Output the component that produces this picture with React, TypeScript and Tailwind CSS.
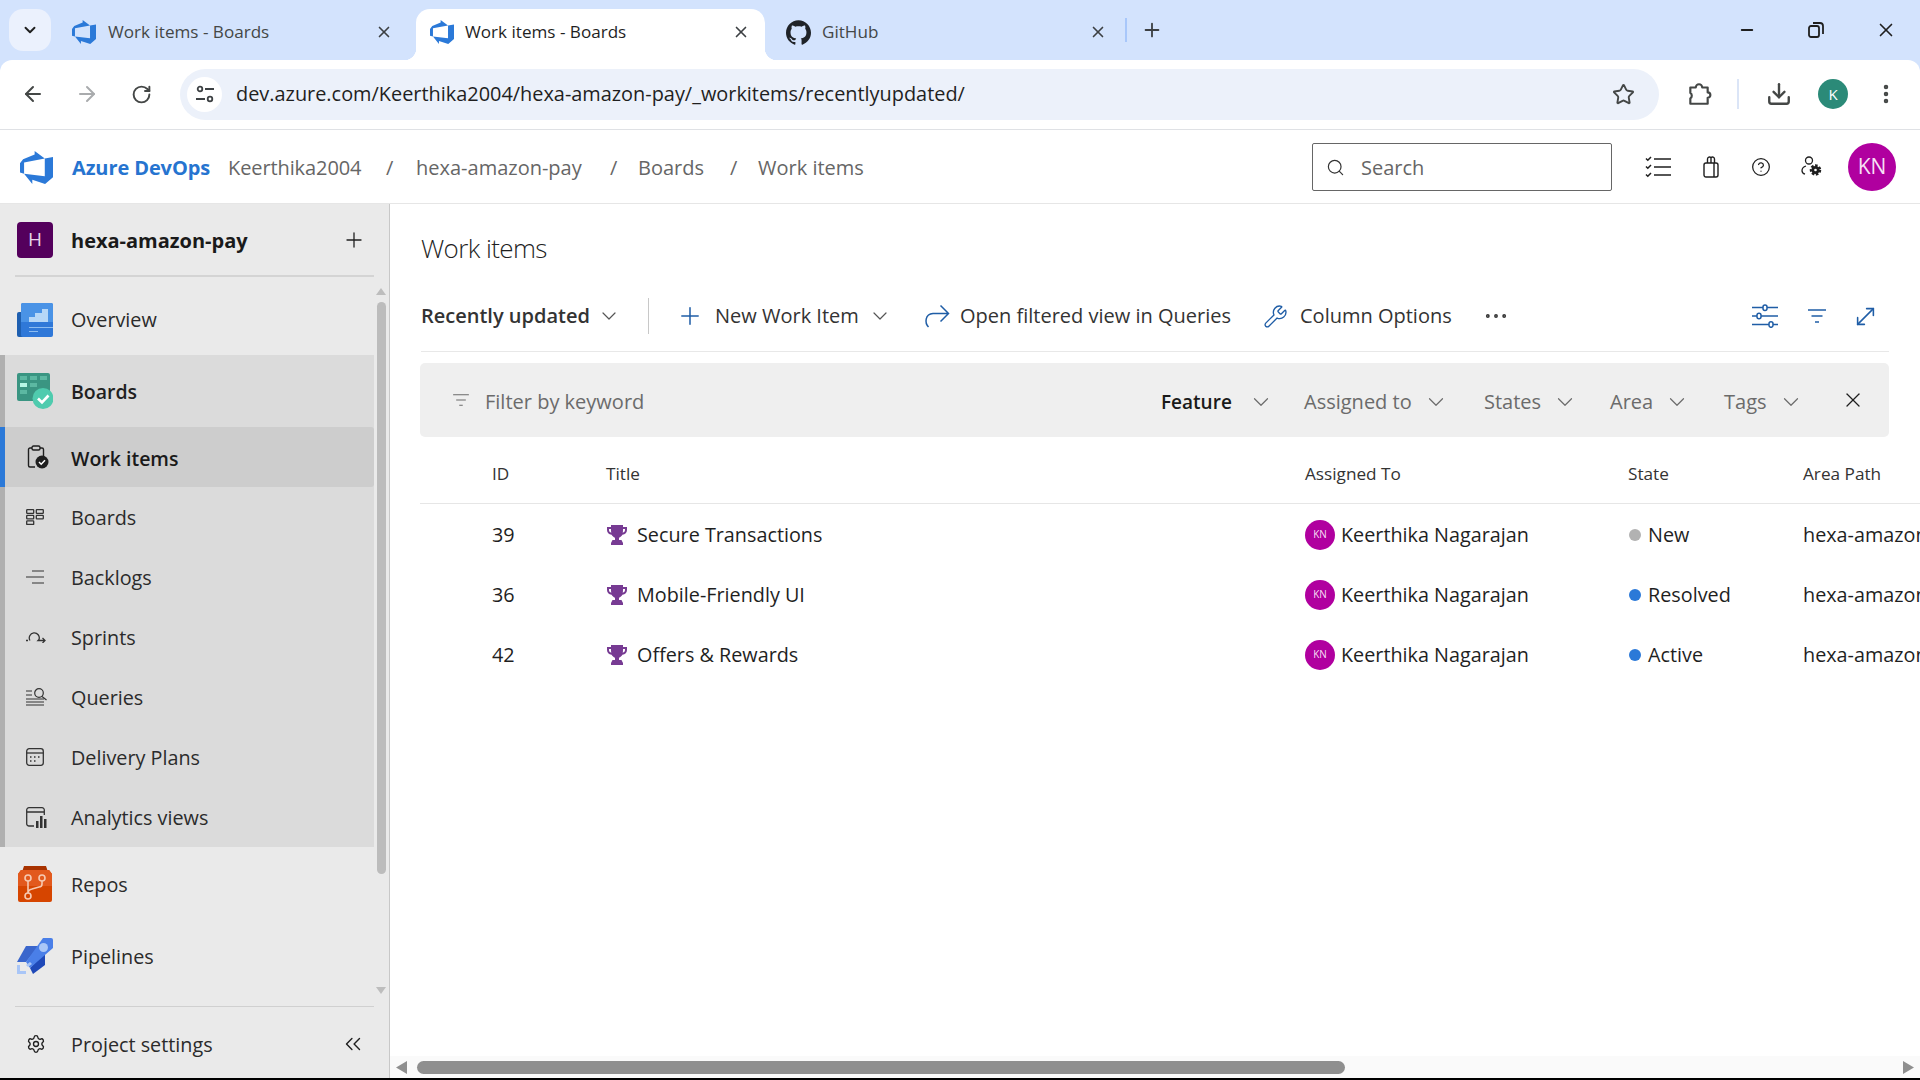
import React from 'react';
import {
  ArrowLeft,
  ArrowRight,
  ChevronDown,
  ChevronsLeft,
  CircleHelp,
  Download,
  EllipsisVertical,
  Ellipsis,
  Minus,
  MoveDiagonal,
  Plus,
  RotateCw,
  Search,
  Settings,
  Star,
  Wrench,
  X,
} from 'lucide-react';
import { SiGithub } from 'react-icons/si';

const ROWS = [
  { id: '39', title: 'Secure Transactions', state: 'New', dot: 'bg-[#b2b2b2]' },
  { id: '36', title: 'Mobile-Friendly UI', state: 'Resolved', dot: 'bg-[#2b79d8]' },
  { id: '42', title: 'Offers & Rewards', state: 'Active', dot: 'bg-[#2b79d8]' },
];

const FILTERS = [
  { label: 'Assigned to', width: 'w-[180px]' },
  { label: 'States', width: 'w-[126px]' },
  { label: 'Area', width: 'w-[114px]' },
  { label: 'Tags', width: 'w-[100px]' },
];

const DevOpsLogo = ({ className }: { className?: string }) => (
  <svg viewBox="0 0 24 24" className={className} fill="currentColor">
    <path d="M0 8.877L2.247 5.91l8.405-3.416V.022l7.37 5.393L2.966 8.338v8.225L0 15.707zm24-4.45v14.651l-5.753 4.9-9.303-3.057v3.056l-5.978-7.416 15.057 1.798V5.415z" />
  </svg>
);

const FilterLines = ({ className }: { className?: string }) => (
  <svg viewBox="0 0 20 16" className={className} fill="none" stroke="currentColor" strokeWidth="1.3">
    <path d="M1 2h18M4.5 8h11M8 14h4" />
  </svg>
);

const Trophy = () => (
  <svg viewBox="0 0 20 20" className="h-5 w-5 shrink-0" fill="#773b93">
    <path d="M4 0h12v2h4v3c0 2.6-1.8 4.4-4.6 4.8-.8 1.5-2 2.5-3.4 2.9V15h2.5l1.5 3v2H4v-2l1.5-3H8v-2.3c-1.4-.4-2.6-1.4-3.4-2.9C1.800 9.400 0 7.600 0 5V2h4zM2 4v1c0 1.300.8 2.300 2.300 2.700C4.100 6.900 4 6 4 5V4zm16 0h-2v1c0 1-.1 1.900-.3 2.700C17.200 7.300 18 6.300 18 5z" />
  </svg>
);

const SmallTriangle = ({ down }: { down?: boolean }) => (
  <svg viewBox="0 0 10 7" className="h-[7px] w-[10px]" fill="#bdbdbd">
    <path d={down ? 'M0 0h10L5 7z' : 'M5 0l5 7H0z'} />
  </svg>
);

const OverviewIcon = () => (
  <svg viewBox="0 0 36 34" className="h-[34px] w-9">
    <rect x="0" y="9" width="14" height="25" rx="2" fill="#1e5fb0" />
    <rect x="4" y="0" width="32" height="34" rx="2" fill="#2f78d8" />
    <path d="M4 2a2 2 0 0 1 2-2h28a2 2 0 0 1 2 2v17H4z" fill="#4a93e6" />
    <path d="M12 14h6v-4h7V6h6v13H12z" fill="#b6d7f7" />
    <path d="M12 24h24v1H12zM12 28h9v1h-9z" fill="#8cbcf0" />
  </svg>
);

const BoardsIcon = () => (
  <svg viewBox="0 0 36 36" className="h-9 w-9">
    <rect x="0" y="0" width="33" height="28" rx="2" fill="#3a9582" />
    <path d="M3 3h7v4H3zM13 3h7v4h-7zM23 3h7v4h-7zM13 10h7v4h-7zM3 17h7v4H3z" fill="#5cb8a2" />
    <rect x="3" y="10" width="7" height="4" fill="#b6f5e4" />
    <circle cx="26" cy="25.500" r="10.500" fill="#4fcbae" />
    <path d="M21 25.500l4 4 6.500-7" stroke="#fff" strokeWidth="2.600" fill="none" />
  </svg>
);

const ReposIcon = () => (
  <svg viewBox="0 0 34 36" className="h-9 w-[34px]">
    <path d="M6 0h22l2 6H4z" fill="#a83200" />
    <path d="M3 4h28l3 4v26a2 2 0 0 1-2 2H2a2 2 0 0 1-2-2V8z" fill="#d64500" />
    <path d="M3 4h28l3 4v12H0V8z" fill="#e2591d" />
    <g stroke="#f6c9b1" strokeWidth="1.600" fill="none">
      <circle cx="10" cy="12" r="3" />
      <circle cx="24" cy="12" r="3" />
      <circle cx="10" cy="30" r="3" />
      <path d="M10 15v12M24 15v3c0 2-1 3-3 3l-7 2c-2 .5-4 2-4 4" />
    </g>
  </svg>
);

const PipelinesIcon = () => (
  <svg viewBox="0 0 36 36" className="h-9 w-9">
    <path d="M9 8h13L9 24H0z" fill="#3a66cc" />
    <path d="M28 14v13l-12 9-3-6z" fill="#1f49b8" />
    <path d="M9 24L26 0h8a2 2 0 0 1 2 2v8L13 30z" fill="#4a7fe8" />
    <circle cx="26.500" cy="9.500" r="4.500" fill="#a9c6f7" />
    <path d="M0 27h3v6h6v3H0z" fill="#a9c6f7" />
    <path d="M9 27l4-3 2 2-4 3z" fill="#a9c6f7" />
  </svg>
);

const WorkItemsIcon = () => (
  <svg viewBox="0 0 22 24" className="h-6 w-[22px]" fill="none" stroke="#1f1f1f" strokeWidth="1.400">
    <path d="M5 3H3a1.500 1.500 0 0 0-1.500 1.500v16A1.500 1.500 0 0 0 3 22h5M13 3h2a1.500 1.500 0 0 1 1.500 1.500V11" />
    <rect x="5" y="1" width="8" height="4" rx="1.500" />
    <circle cx="15" cy="17" r="6.500" fill="#1f1f1f" stroke="none" />
    <path d="M12 17l2.200 2.200 3.800-4" stroke="#fff" strokeWidth="1.500" />
  </svg>
);

const SubBoardsIcon = () => (
  <svg viewBox="0 0 18 16" className="h-4 w-[18px]" fill="none" stroke="#333" strokeWidth="1.300">
    <rect x=".7" y=".7" width="7" height="3.600" rx=".6" />
    <rect x=".7" y="6.300" width="7" height="3.600" rx=".6" />
    <rect x=".7" y="11.900" width="7" height="3.600" rx=".6" />
    <rect x="10.300" y=".7" width="7" height="3.600" rx=".6" />
    <rect x="10.300" y="6.300" width="7" height="3.600" rx=".6" />
  </svg>
);

const BacklogsIcon = () => (
  <svg viewBox="0 0 18 14" className="h-[14px] w-[18px]" fill="none" stroke="#333" strokeWidth="1.200">
    <path d="M6 1h12M0 7h18M6 13h12" />
  </svg>
);

const SprintsIcon = () => (
  <svg viewBox="0 0 20 12" className="h-3 w-5" fill="none" stroke="#333" strokeWidth="1.300">
    <path d="M0 9.500h2M4 9.500a5 5 0 1 1 9-1l-1 1h7M16.500 7l2.500 2.500-2.500 2.500" />
  </svg>
);

const QueriesIcon = () => (
  <svg viewBox="0 0 21 18" className="h-[18px] w-[21px]" fill="none" stroke="#333" strokeWidth="1.200">
    <path d="M0 3h6M0 7h6M0 11h18M0 14h18M0 17h18" />
    <circle cx="13" cy="5" r="4.300" />
    <path d="M16 8.500l4.500 3.500" />
  </svg>
);

const DeliveryIcon = () => (
  <svg viewBox="0 0 18 18" className="h-[18px] w-[18px]" fill="none" stroke="#333" strokeWidth="1.300">
    <rect x=".7" y=".7" width="16.600" height="16.600" rx="2.500" />
    <path d="M.7 5h16.600" />
    <path d="M4 9h1.500M8 9h1.500M12 9h1.500M4 13h1.500M8 13h1.500" strokeWidth="1.500" />
  </svg>
);

const AnalyticsIcon = () => (
  <svg viewBox="0 0 21 21" className="h-[21px] w-[21px]" fill="none" stroke="#333" strokeWidth="1.300">
    <path d="M8 19H3a2.300 2.300 0 0 1-2.300-2.300V3A2.300 2.300 0 0 1 3 .7h13A2.300 2.300 0 0 1 18.300 3v5M.7 5h17.600" />
    <path d="M10 14h2.500v7H10zM14 9h2.500v12H14zM18 12h2.500v9H18z" fill="#333" stroke="none" />
  </svg>
);

const UserGear = () => (
  <svg viewBox="0 0 22 22" className="h-[22px] w-[22px]" fill="none" stroke="#1f1f1f" strokeWidth="1.300">
    <circle cx="8" cy="4.500" r="3.500" />
    <path d="M5 10C2.500 10.800 1 12.700 1 14.700c0 1.500 1 2.800 3 3.500" />
    <circle cx="14.500" cy="14" r="4" fill="#1f1f1f" strokeWidth="3.500" strokeDasharray="2.200 1.400" />
    <circle cx="14.500" cy="14" r="2" fill="#1f1f1f" stroke="none" />
    <circle cx="14.500" cy="14" r="1.300" fill="#fff" stroke="none" />
  </svg>
);

const TaskList = () => (
  <svg viewBox="0 0 26 22" className="h-[22px] w-[26px]" fill="none" stroke="#1f1f1f" strokeWidth="1.500">
    <path d="M9 3h17M9 11h17M9 19h17" strokeWidth="1.700" />
    <path d="M1 2.500l1.800 1.800L6 1M1 10.500l1.800 1.800L6 9M1 18.500l1.800 1.800L6 17" />
  </svg>
);

const BagIcon = () => (
  <svg viewBox="0 0 16 22" className="h-[22px] w-4" fill="none" stroke="#1f1f1f" strokeWidth="1.400">
    <rect x="1" y="7" width="14" height="14" rx="2" />
    <path d="M4.500 7V3a2 2 0 0 1 3.500-1.300A2 2 0 0 1 11.500 3v4M8 2v5M11 7v14" />
  </svg>
);

const SiteInfoIcon = () => (
  <svg viewBox="0 0 18 18" className="h-[18px] w-[18px]" fill="none" stroke="#3c4043" strokeWidth="1.800">
    <circle cx="4" cy="4" r="2.300" />
    <path d="M9 4h9M0 14h9" />
    <circle cx="14" cy="14" r="2.300" />
  </svg>
);

const ExtensionIcon = () => (
  <svg viewBox="0 0 24 24" className="h-[26px] w-[26px]" fill="none" stroke="#444746" strokeWidth="2">
    <path d="M4 6h5a3 3 0 0 1 6 0h5v4.500a2.500 2.500 0 0 1 0 5V21H4v-5a3 3 0 0 0 0-5z" strokeLinejoin="round" />
  </svg>
);

const RestoreIcon = () => (
  <svg viewBox="0 0 16 16" className="h-4 w-4" fill="none" stroke="#1f1f1f" strokeWidth="1.800">
    <rect x="1" y="4" width="10" height="11" rx="2" />
    <path d="M5 1h7a3 3 0 0 1 3 3v8" />
  </svg>
);

const ForwardArrow = () => (
  <svg viewBox="0 0 28 28" className="h-7 w-7" fill="none" stroke="#1f5da6" strokeWidth="1.500">
    <path d="M6.500 25C2.500 21 3 12 11 11.500h15M18.500 3.500l8 8-8 8" />
  </svg>
);

const ViewSliders = () => (
  <svg viewBox="0 0 26 24" className="h-6 w-[26px]" fill="none" stroke="#1f5da6" strokeWidth="1.500">
    <path d="M0 3.500h11M15 3.500h11M0 12h5M9 12h17M0 20.500h17M21 20.500h5" />
    <rect x="11" y="1" width="4" height="5.500" rx="2" />
    <rect x="5" y="9.200" width="4" height="5.500" rx="2" />
    <rect x="17" y="17.800" width="4" height="5.500" rx="2" />
  </svg>
);

const SideLink = ({ icon, label }: { icon: React.ReactNode; label: string }) => (
  <div className="flex h-[60px] items-center">
    <div className="flex w-[71px] shrink-0 items-center pl-[26px]">{icon}</div>
    <span className="mt-[2px] text-[19.800px] text-[#2b2b2b]">{label}</span>
  </div>
);

const ChromeTab = ({ icon, label, close, active, width }: { icon: React.ReactNode; label: string; close: string; active?: boolean; width: string }) => (
  <div className={`relative flex h-[51px] shrink-0 items-center pb-[5px] ${width} ${active ? 'rounded-t-[14px] bg-white text-[#1f1f1f]' : 'text-[#444746]'}`}>
    {active && (
      <>
        <div className="absolute -left-3 bottom-0 h-3 w-3 bg-[radial-gradient(circle_at_0_0,transparent_12px,#ffffff_12.500px)]" />
        <div className="absolute -right-3 bottom-0 h-3 w-3 bg-[radial-gradient(circle_at_100%_0,transparent_12px,#ffffff_12.500px)]" />
      </>
    )}
    {icon}
    <span className="text-[17.100px]">{label}</span>
    <X size={18} strokeWidth={2.200} className={`absolute top-[14px] ${close} text-[#3c4043]`} />
  </div>
);

export default function App() {
  return (
    <div className="flex h-[1080px] w-[1920px] flex-col overflow-hidden bg-white font-['Open_Sans',sans-serif]">
      {/* Browser chrome */}
      <div className="h-[130px] shrink-0 bg-[#d3e3fd]">
        <div className="flex h-[60px] pt-[9px]">
          <div className="ml-[9px] flex h-[42px] w-[42px] shrink-0 items-center justify-center rounded-[14px] bg-[#ebf1fd]">
            <ChevronDown size={18} strokeWidth={2.500} className="text-[#1f1f1f]" />
          </div>
          <div className="ml-[21px] w-[344px] shrink-0">
            <ChromeTab width="w-full" close="left-[303px]" label="Work items - Boards" icon={<DevOpsLogo className="mr-[12px] h-6 w-6 text-[#2b79d8]" />} />
          </div>
          <ChromeTab active width="w-[349px] pl-[14px]" close="left-[316px]" label="Work items - Boards" icon={<DevOpsLogo className="mr-[11px] h-6 w-6 text-[#2b79d8]" />} />
          <div className="ml-[21px] w-[339px] shrink-0">
            <ChromeTab width="w-full" close="left-[303px]" label="GitHub" icon={<SiGithub size={25} className="mr-[11px] text-[#1f2328]" />} />
          </div>
          <div className="mt-[9px] h-6 w-[2px] bg-[#a8c7fa]" />
          <Plus size={22} strokeWidth={2} className="ml-[14px] mt-[10px] text-[#3c4043]" />
          <div className="ml-auto flex h-[42px] items-center">
            <Minus size={18} strokeWidth={2.500} className="mr-[52px] text-[#1f1f1f]" />
            <RestoreIcon />
            <div className="w-[51px]" />
            <X size={22} strokeWidth={1.800} className="mr-[23px] text-[#1f1f1f]" />
          </div>
        </div>
        <div className="flex h-[70px] items-center rounded-t-[12px] border-b border-[#dfe1e5] bg-white pb-px">
          <ArrowLeft size={24} strokeWidth={2} className="ml-[21px] text-[#444746]" />
          <ArrowRight size={24} strokeWidth={2} className="ml-[30px] text-[#a9abad]" />
          <RotateCw size={21} strokeWidth={2.200} className="ml-[32px] text-[#444746]" />
          <div className="ml-[28px] flex h-[51px] w-[1479px] items-center rounded-full bg-[#ecf1fa] pl-[7px] pr-[24px]">
            <div className="flex h-[35px] w-[35px] items-center justify-center rounded-full bg-white">
              <SiteInfoIcon />
            </div>
            <span className="ml-[14px] text-[19.900px] text-[#1f1f1f]">dev.azure.com/Keerthika2004/hexa-amazon-pay/_workitems/recentlyupdated/</span>
            <Star size={23} strokeWidth={2} className="ml-auto text-[#444746]" />
          </div>
          <div className="ml-[27px]"><ExtensionIcon /></div>
          <div className="ml-[25px] h-[30px] w-[2px] bg-[#dbe5f7]" />
          <Download size={26} strokeWidth={2.200} className="ml-[27px] text-[#444746]" />
          <div className="ml-[26px] flex h-[30px] w-[30px] items-center justify-center rounded-full bg-[#2b8a78] text-[15px] text-white">K</div>
          <EllipsisVertical size={24} strokeWidth={2.500} className="ml-[26px] text-[#444746]" />
        </div>
      </div>

      {/* Azure DevOps header */}
      <div className="flex h-[74px] shrink-0 items-center border-b border-[#e6e6e6] pt-px text-[#666666]">
        <DevOpsLogo className="ml-[20px] h-[33px] w-[33px] text-[#2b79d8]" />
        <span className="ml-[19px] mt-[2px] w-[156px] text-[20px] font-bold tracking-[-0.1px] text-[#2674d0]">Azure DevOps</span>
        <span className="mt-[2px] w-[158px] text-[20px] tracking-[-0.1px]">Keerthika2004</span>
        <span className="mt-[2px] w-[30px] text-[20px]">/</span>
        <span className="mt-[2px] w-[194px] text-[20px]">hexa-amazon-pay</span>
        <span className="mt-[2px] w-[28px] text-[20px]">/</span>
        <span className="mt-[2px] w-[92px] text-[20px]">Boards</span>
        <span className="mt-[2px] w-[28px] text-[20px]">/</span>
        <span className="mt-[2px] text-[20px]">Work items</span>
        <div className="ml-auto flex h-[48px] w-[300px] items-center rounded-[2px] border border-[#666666] pl-[13px]">
          <Search size={19} strokeWidth={1.500} className="text-[#333333]" />
          <span className="ml-[16px] mt-[2px] text-[20px] text-[#666666]">Search</span>
        </div>
        <div className="ml-[33px]"><TaskList /></div>
        <div className="ml-[32px]"><BagIcon /></div>
        <CircleHelp size={20} strokeWidth={1.500} className="ml-[32px] text-[#1f1f1f]" />
        <div className="ml-[30px]"><UserGear /></div>
        <div className="ml-[25px] mr-[24px] flex h-[48px] w-[48px] items-center justify-center rounded-full bg-[#b0009f] text-[21px] text-[#f6dff4]">KN</div>
      </div>

      <div className="flex min-h-0 flex-1">
        {/* Project sidebar */}
        <aside className="flex w-[390px] shrink-0 flex-col border-r border-[#c8c8c8] bg-[#eaeaea]">
          <div className="flex h-[71px] shrink-0 items-center pl-[17px]">
            <div className="flex h-9 w-9 items-center justify-center rounded-[4px] bg-[#54005c] text-[19px] text-[#e9d3ea]">H</div>
            <span className="ml-[18px] mt-[2px] text-[20px] font-bold text-[#1a1a1a]">hexa-amazon-pay</span>
            <Plus size={24} strokeWidth={1.300} className="ml-auto mr-[23px] text-[#1f1f1f]" />
          </div>
          <div className="ml-[15px] h-[2px] w-[359px] shrink-0 bg-[#d4d4d4]" />
          <div className="flex min-h-0 flex-1">
            <nav className="w-[374px] shrink-0">
              <div className="flex h-[78px] items-center pl-[17px] pt-[8px]">
                <div className="w-[54px]"><OverviewIcon /></div>
                <span className="text-[19.800px] text-[#2b2b2b]">Overview</span>
              </div>
              <div className="border-l-[5px] border-[#b0b0b0] bg-[#dbdbdb]">
                <div className="flex h-[72px] items-center pl-[12px]">
                  <div className="w-[54px]"><BoardsIcon /></div>
                  <span className="mt-[2px] text-[19.500px] font-semibold text-[#1f1f1f]">Boards</span>
                </div>
                <div className="-ml-[5px] flex h-[60px] items-center rounded-r-[3px] border-l-[5px] border-[#2b79d8] bg-[#cdcdcd] pl-[22px]">
                  <div className="w-[44px]"><WorkItemsIcon /></div>
                  <span className="mt-[3px] text-[19.500px] font-semibold text-[#1a1a1a]">Work items</span>
                </div>
                <div className="-ml-[5px]">
                  <SideLink icon={<SubBoardsIcon />} label="Boards" />
                  <SideLink icon={<BacklogsIcon />} label="Backlogs" />
                  <SideLink icon={<SprintsIcon />} label="Sprints" />
                  <SideLink icon={<QueriesIcon />} label="Queries" />
                  <SideLink icon={<DeliveryIcon />} label="Delivery Plans" />
                  <SideLink icon={<AnalyticsIcon />} label="Analytics views" />
                </div>
              </div>
              <div className="flex h-[74px] items-center pl-[18px]">
                <div className="w-[53px]"><ReposIcon /></div>
                <span className="mt-[2px] text-[19.800px] text-[#2b2b2b]">Repos</span>
              </div>
              <div className="flex h-[70px] items-center pl-[17px]">
                <div className="w-[54px]"><PipelinesIcon /></div>
                <span className="mt-[2px] text-[19.800px] text-[#2b2b2b]">Pipelines</span>
              </div>
            </nav>
            <div className="flex flex-1 flex-col items-center pr-px pt-[11px]">
              <SmallTriangle />
              <div className="mt-[7px] h-[572px] w-[9px] rounded-full bg-[#bcbcbc]" />
              <div className="mt-[113px]"><SmallTriangle down /></div>
            </div>
          </div>
          <div className="ml-[15px] h-px w-[359px] shrink-0 bg-[#d0d0d0]" />
          <div className="flex h-[71px] shrink-0 items-center pl-[26px] pt-[3px]">
            <Settings size={20} strokeWidth={1.600} className="mr-[25px] text-[#1f1f1f]" />
            <span className="mt-[2px] text-[19.800px] text-[#2b2b2b]">Project settings</span>
            <ChevronsLeft size={26} strokeWidth={1.300} className="ml-auto mr-[23px] text-[#1f1f1f]" />
          </div>
        </aside>

        {/* Main content */}
        <main className="flex min-w-0 flex-1 flex-col overflow-hidden">
          <div className="pl-[30px] pr-[31px]">
            <div className="h-[84px] pl-px pt-[26px]">
              <h1 className="text-[26px] font-light leading-9 tracking-[-0.6px] text-[#1f1f1f]">Work items</h1>
            </div>
            <div className="ml-px flex h-[64px] items-center border-b border-[#e8e8e8] pb-[7px] text-[20px] text-[#333333]">
              <span className="w-[176px] font-semibold">Recently updated</span>
              <ChevronDown size={24} strokeWidth={1.200} className="text-[#555555]" />
              <div className="ml-[27px] h-[36px] w-px bg-[#c8c8c8]" />
              <Plus size={28} strokeWidth={1.300} className="ml-[27px] text-[#1f5da6]" />
              <span className="ml-[11px] w-[153px]">New Work Item</span>
              <ChevronDown size={24} strokeWidth={1.200} className="text-[#555555]" />
              <div className="ml-[30px]"><ForwardArrow /></div>
              <span className="ml-[10px] w-[303px]">Open filtered view in Queries</span>
              <Wrench size={25} strokeWidth={1.300} className="text-[#1f5da6]" />
              <span className="ml-[12px] w-[182px]">Column Options</span>
              <Ellipsis size={28} strokeWidth={1.300} className="text-[#333333]" />
              <div className="ml-auto mr-[29px]"><ViewSliders /></div>
              <FilterLines className="mr-[25px] h-4 w-5 text-[#1f5da6]" />
              <MoveDiagonal size={27} strokeWidth={1.400} className="mr-[10px] text-[#1f5da6]" />
            </div>
            <div className="mt-[11px] flex h-[74px] items-center rounded-[5px] bg-[#efefef] pl-[32px] text-[20px] text-[#6b6b6b]">
              <FilterLines className="h-[14px] w-[18px]" />
              <span className="ml-[15px] mt-[4px] w-[676px]">Filter by keyword</span>
              <div className="mt-[4px] flex w-[143px] items-center">
                <span className="w-[87px] text-[19px] font-semibold text-[#1a1a1a]">Feature</span>
                <ChevronDown size={26} strokeWidth={1.100} />
              </div>
              {FILTERS.map((f) => (
                <div key={f.label} className={`mt-[4px] flex items-center justify-start ${f.width}`}>
                  <span className="mr-[11px]">{f.label}</span>
                  <ChevronDown size={26} strokeWidth={1.100} />
                </div>
              ))}
              <X size={24} strokeWidth={1.300} className="ml-[17px] text-[#1f1f1f]" />
            </div>
          </div>

          {/* Work item table */}
          <div className="pl-[30px]">
            <div className="grid h-[67px] grid-cols-[186px_699px_323px_175px_1fr] items-center border-b border-[#e6e6e6] pt-[7px] text-[17.200px] text-[#333333]">
              <span className="pl-[72px]">ID</span>
              <span>Title</span>
              <span>Assigned To</span>
              <span>State</span>
              <span className="whitespace-nowrap">Area Path</span>
            </div>
            {ROWS.map((row) => (
              <div key={row.id} className="grid h-[60px] grid-cols-[186px_699px_323px_175px_1fr] items-center pt-px text-[19.800px] text-[#1f1f1f]">
                <span className="pl-[72px]">{row.id}</span>
                <div className="flex items-center gap-[10px]">
                  <div className="pl-px"><Trophy /></div>
                  <span>{row.title}</span>
                </div>
                <div className="flex items-center gap-[6px]">
                  <div className="flex h-[30px] w-[30px] items-center justify-center rounded-full bg-[#b0009f] text-[10px] text-[#f6dff4]">KN</div>
                  <span>Keerthika Nagarajan</span>
                </div>
                <div className="flex items-center gap-[7px] pl-px">
                  <div className={`h-3 w-3 rounded-full ${row.dot}`} />
                  <span>{row.state}</span>
                </div>
                <span className="overflow-hidden whitespace-nowrap">hexa-amazon-pay</span>
              </div>
            ))}
          </div>

          {/* Horizontal scrollbar */}
          <div className="mt-auto flex h-[22px] shrink-0 items-center bg-[#fafafa]">
            <svg viewBox="0 0 11 13" className="ml-[6px] h-[13px] w-[11px]" fill="#8f8f8f"><path d="M11 0v13L0 6.500z" /></svg>
            <div className="ml-[10px] h-[13px] w-[928px] rounded-full bg-[#8f8f8f]" />
            <svg viewBox="0 0 11 13" className="ml-auto mr-[6px] h-[13px] w-[11px]" fill="#8f8f8f"><path d="M0 0v13l11-6.500z" /></svg>
          </div>
        </main>
      </div>
      <div className="h-[2px] shrink-0 bg-black" />
    </div>
  );
}
